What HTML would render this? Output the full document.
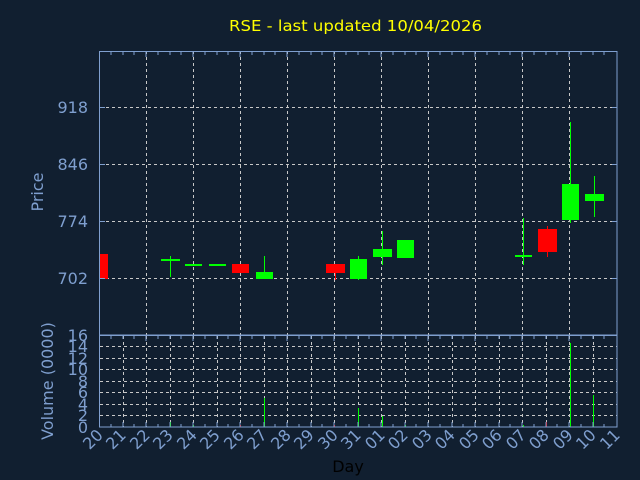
<!DOCTYPE html>
<html><head><meta charset="utf-8"><style>
html,body{margin:0;padding:0;background:#111f30;}
svg{display:block;font-family:"DejaVu Sans","Liberation Sans",sans-serif;}
</style></head><body>
<svg width="640" height="480" viewBox="0 0 640 480" xmlns="http://www.w3.org/2000/svg">
<rect width="640" height="480" fill="#111f30"/>
<text x="229" y="31" fill="#ffff00" font-size="15" textLength="253" lengthAdjust="spacingAndGlyphs">RSE - last updated 10/04/2026</text>
<g stroke="#c8c8c8" stroke-width="1" stroke-dasharray="3,3" fill="none">
<line x1="100" y1="107.5" x2="617" y2="107.5"/>
<line x1="100" y1="164.5" x2="617" y2="164.5"/>
<line x1="100" y1="221.5" x2="617" y2="221.5"/>
<line x1="100" y1="278.5" x2="617" y2="278.5"/>
<line x1="146.5" y1="51" x2="146.5" y2="335"/>
<line x1="193.5" y1="51" x2="193.5" y2="335"/>
<line x1="240.5" y1="51" x2="240.5" y2="335"/>
<line x1="287.5" y1="51" x2="287.5" y2="335"/>
<line x1="334.5" y1="51" x2="334.5" y2="335"/>
<line x1="381.5" y1="51" x2="381.5" y2="335"/>
<line x1="428.5" y1="51" x2="428.5" y2="335"/>
<line x1="475.5" y1="51" x2="475.5" y2="335"/>
<line x1="522.5" y1="51" x2="522.5" y2="335"/>
<line x1="569.5" y1="51" x2="569.5" y2="335"/>
<line x1="100" y1="346.5" x2="617" y2="346.5"/>
<line x1="100" y1="358.5" x2="617" y2="358.5"/>
<line x1="100" y1="369.5" x2="617" y2="369.5"/>
<line x1="100" y1="381.5" x2="617" y2="381.5"/>
<line x1="100" y1="392.5" x2="617" y2="392.5"/>
<line x1="100" y1="404.5" x2="617" y2="404.5"/>
<line x1="100" y1="415.5" x2="617" y2="415.5"/>
<line x1="123.5" y1="336" x2="123.5" y2="427"/><line x1="146.5" y1="336" x2="146.5" y2="427"/>
<line x1="170.5" y1="336" x2="170.5" y2="427"/><line x1="193.5" y1="336" x2="193.5" y2="427"/>
<line x1="217.5" y1="336" x2="217.5" y2="427"/><line x1="240.5" y1="336" x2="240.5" y2="427"/>
<line x1="264.5" y1="336" x2="264.5" y2="427"/><line x1="287.5" y1="336" x2="287.5" y2="427"/>
<line x1="311.5" y1="336" x2="311.5" y2="427"/><line x1="334.5" y1="336" x2="334.5" y2="427"/>
<line x1="358.5" y1="336" x2="358.5" y2="427"/><line x1="381.5" y1="336" x2="381.5" y2="427"/>
<line x1="405.5" y1="336" x2="405.5" y2="427"/><line x1="428.5" y1="336" x2="428.5" y2="427"/>
<line x1="452.5" y1="336" x2="452.5" y2="427"/><line x1="475.5" y1="336" x2="475.5" y2="427"/>
<line x1="499.5" y1="336" x2="499.5" y2="427"/><line x1="522.5" y1="336" x2="522.5" y2="427"/>
<line x1="546.5" y1="336" x2="546.5" y2="427"/><line x1="569.5" y1="336" x2="569.5" y2="427"/>
<line x1="593.5" y1="336" x2="593.5" y2="427"/>
</g>
<g stroke-width="1">
<rect x="99" y="254" width="9" height="25" fill="#ff0000"/>
<line x1="170.5" y1="256" x2="170.5" y2="277" stroke="#00ff00"/><rect x="161" y="259" width="19" height="2" fill="#00ff00"/>
<rect x="185" y="264" width="17" height="2" fill="#00ff00"/>
<rect x="209" y="264" width="17" height="2" fill="#00ff00"/>
<rect x="232" y="264" width="17" height="9" fill="#ff0000"/>
<line x1="264.5" y1="256" x2="264.5" y2="278" stroke="#00ff00"/><rect x="256" y="272" width="17" height="7" fill="#00ff00"/>
<line x1="335.5" y1="270" x2="335.5" y2="280" stroke="#ff0000"/><rect x="326" y="264" width="19" height="9" fill="#ff0000"/>
<line x1="358.5" y1="256" x2="358.5" y2="280" stroke="#00ff00"/><rect x="350" y="259" width="17" height="20" fill="#00ff00"/>
<line x1="382.5" y1="231" x2="382.5" y2="265" stroke="#00ff00"/><rect x="373" y="249" width="19" height="8" fill="#00ff00"/>
<rect x="397" y="240" width="17" height="18" fill="#00ff00"/>
<line x1="523.5" y1="218" x2="523.5" y2="265" stroke="#00ff00"/><rect x="515" y="255" width="17" height="2" fill="#00ff00"/>
<line x1="547.5" y1="226" x2="547.5" y2="257" stroke="#ff0000"/><rect x="538" y="229" width="19" height="23" fill="#ff0000"/>
<line x1="570.5" y1="122" x2="570.5" y2="223" stroke="#00ff00"/><rect x="562" y="184" width="17" height="36" fill="#00ff00"/>
<line x1="594.5" y1="176" x2="594.5" y2="217" stroke="#00ff00"/><rect x="585" y="194" width="19" height="7" fill="#00ff00"/>
</g>
<g stroke-width="1">
<line x1="170.5" y1="422" x2="170.5" y2="427" stroke="#00ff00"/>
<line x1="193.5" y1="425" x2="193.5" y2="427" stroke="#00ff00"/>
<line x1="240.5" y1="425" x2="240.5" y2="427" stroke="#ff0000"/>
<line x1="264.5" y1="398" x2="264.5" y2="427" stroke="#00ff00"/>
<line x1="334.5" y1="425" x2="334.5" y2="427" stroke="#ff0000"/>
<line x1="358.5" y1="408" x2="358.5" y2="427" stroke="#00ff00"/>
<line x1="382.5" y1="416" x2="382.5" y2="427" stroke="#00ff00"/>
<line x1="405.5" y1="425" x2="405.5" y2="427" stroke="#00ff00"/>
<line x1="523.5" y1="425" x2="523.5" y2="427" stroke="#00ff00"/>
<line x1="546.5" y1="422" x2="546.5" y2="427" stroke="#ff0000"/>
<line x1="570.5" y1="343" x2="570.5" y2="427" stroke="#00ff00"/>
<line x1="593.5" y1="395" x2="593.5" y2="427" stroke="#00ff00"/>
</g>
<g stroke="#7f9fcf" fill="none" stroke-width="1">
<rect x="99.5" y="51.5" width="517.5" height="283.5"/>
<rect x="99.5" y="335.5" width="517.5" height="91.5"/>
<path d="M111 52v3M123 52v3M134 52v3M146 52v5M158 52v3M170 52v3M181 52v3M193 52v5M205 52v3M217 52v3M228 52v3M240 52v5M252 52v3M264 52v3M275 52v3M287 52v5M299 52v3M311 52v3M322 52v3M334 52v5M346 52v3M358 52v3M369 52v3M381 52v5M393 52v3M405 52v3M416 52v3M428 52v5M440 52v3M452 52v3M463 52v3M475 52v5M487 52v3M499 52v3M510 52v3M522 52v5M534 52v3M546 52v3M557 52v3M569 52v5M581 52v3M593 52v3M604 52v3"/>
<path d="M111 336v3M123 336v3M134 336v3M146 336v5M158 336v3M170 336v3M181 336v3M193 336v5M205 336v3M217 336v3M228 336v3M240 336v5M252 336v3M264 336v3M275 336v3M287 336v5M299 336v3M311 336v3M322 336v3M334 336v5M346 336v3M358 336v3M369 336v3M381 336v5M393 336v3M405 336v3M416 336v3M428 336v5M440 336v3M452 336v3M463 336v3M475 336v5M487 336v3M499 336v3M510 336v3M522 336v5M534 336v3M546 336v3M557 336v3M569 336v5M581 336v3M593 336v3M604 336v3"/>
<path d="M111 427v-3M123 427v-5M134 427v-3M146 427v-5M158 427v-3M170 427v-5M181 427v-3M193 427v-5M205 427v-3M217 427v-5M228 427v-3M240 427v-5M252 427v-3M264 427v-5M275 427v-3M287 427v-5M299 427v-3M311 427v-5M322 427v-3M334 427v-5M346 427v-3M358 427v-5M369 427v-3M381 427v-5M393 427v-3M405 427v-5M416 427v-3M428 427v-5M440 427v-3M452 427v-5M463 427v-3M475 427v-5M487 427v-3M499 427v-5M510 427v-3M522 427v-5M534 427v-3M546 427v-5M557 427v-3M569 427v-5M581 427v-3M593 427v-5M604 427v-3"/>
<path d="M100 107.5h5M100 164.5h5M100 221.5h5M100 278.5h5M612 107.5h5M612 164.5h5M612 221.5h5M612 278.5h5"/>
</g>
<g fill="#7f9fcf" font-size="16" text-anchor="end">
<text x="88" y="113">918</text>
<text x="88" y="170">846</text>
<text x="88" y="227">774</text>
<text x="88" y="284">702</text>
<text x="88" y="341">16</text>
<text x="88" y="352">14</text>
<text x="88" y="364">12</text>
<text x="88" y="375">10</text>
<text x="88" y="387">8</text>
<text x="88" y="398">6</text>
<text x="88" y="410">4</text>
<text x="88" y="421">2</text>
<text x="88" y="433">0</text>
</g>
<text transform="translate(43,192) rotate(-90)" fill="#7f9fcf" font-size="16" text-anchor="middle">Price</text>
<text transform="translate(53,381) rotate(-90)" fill="#7f9fcf" font-size="16" text-anchor="middle">Volume (0000)</text>
<g fill="#7f9fcf" font-size="16" text-anchor="end">
<text transform="translate(104,436) rotate(-45)">20</text>
<text transform="translate(127,436) rotate(-45)">21</text>
<text transform="translate(151,436) rotate(-45)">22</text>
<text transform="translate(174,436) rotate(-45)">23</text>
<text transform="translate(198,436) rotate(-45)">24</text>
<text transform="translate(221,436) rotate(-45)">25</text>
<text transform="translate(245,436) rotate(-45)">26</text>
<text transform="translate(268,436) rotate(-45)">27</text>
<text transform="translate(292,436) rotate(-45)">28</text>
<text transform="translate(315,436) rotate(-45)">29</text>
<text transform="translate(339,436) rotate(-45)">30</text>
<text transform="translate(362,436) rotate(-45)">31</text>
<text transform="translate(386,436) rotate(-45)">01</text>
<text transform="translate(409,436) rotate(-45)">02</text>
<text transform="translate(433,436) rotate(-45)">03</text>
<text transform="translate(456,436) rotate(-45)">04</text>
<text transform="translate(480,436) rotate(-45)">05</text>
<text transform="translate(503,436) rotate(-45)">06</text>
<text transform="translate(527,436) rotate(-45)">07</text>
<text transform="translate(550,436) rotate(-45)">08</text>
<text transform="translate(574,436) rotate(-45)">09</text>
<text transform="translate(597,436) rotate(-45)">10</text>
<text transform="translate(621,436) rotate(-45)">11</text>
</g>
<text x="348" y="472" fill="#000000" font-size="16" text-anchor="middle">Day</text>
</svg>
</body></html>
